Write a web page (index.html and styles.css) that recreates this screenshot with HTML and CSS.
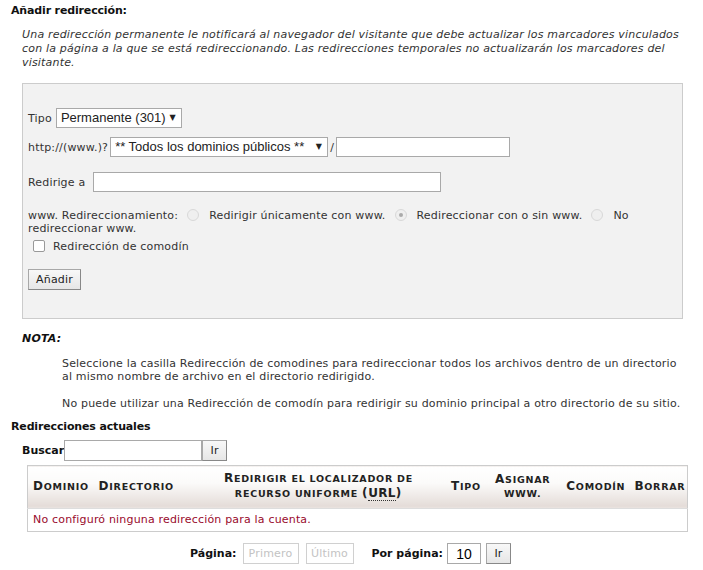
FILE: index.html
```html
<!DOCTYPE html>
<html lang="es">
<head>
<meta charset="utf-8">
<title>Redirecciones</title>
<link rel="stylesheet" href="styles.css">
</head>
<body>
<h2 class="title">Añadir redirección:</h2>
<p class="intro">Una redirección permanente le notificará al navegador del visitante que debe actualizar los marcadores vinculados con la página a la que se está redireccionando. Las redirecciones temporales no actualizarán los marcadores del visitante.</p>

<div class="box">
  <div class="row row-tipo">
    <label class="lbl">Tipo</label>
    <span class="sel sel-tipo"><select><option>Permanente (301)</option></select></span>
  </div>
  <div class="row row-dom">
    <label class="lbl">http://(www.)?</label><span class="sel sel-dom"><select><option>** Todos los dominios públicos **</option></select></span><span class="slash">/</span><input class="txt txt-path" type="text">
  </div>
  <div class="row row-redir">
    <label class="lbl">Redirige a</label>
    <input class="txt txt-redir" type="text">
  </div>
  <div class="row row-www"><span>www. Redireccionamiento:</span><span class="radio"></span><span>Redirigir únicamente con www.</span><span class="radio on"></span><span>Redireccionar con o sin www.</span><span class="radio"></span><span>No</span><br><span>redireccionar www.</span></div>
  <div class="row row-wild">
    <span class="check"></span><span>Redirección de comodín</span>
  </div>
  <div class="row row-btn">
    <button class="btn btn-add">Añadir</button>
  </div>
</div>

<h3 class="nota">NOTA:</h3>
<p class="note">Seleccione la casilla Redirección de comodines para redireccionar todos los archivos dentro de un directorio al mismo nombre de archivo en el directorio redirigido.</p>
<p class="note note2">No puede utilizar una Redirección de comodín para redirigir su dominio principal a otro directorio de su sitio.</p>

<h2 class="title2">Redirecciones actuales</h2>
<div class="search">
  <label class="blbl">Buscar</label><input class="txt txt-search" type="text"><button class="btn btn-ir">Ir</button>
</div>

<table class="tbl">
  <colgroup>
    <col class="w-dom"><col class="w-dir"><col class="w-url"><col class="w-tipo"><col class="w-www"><col class="w-com"><col class="w-del">
  </colgroup>
  <thead>
    <tr>
      <th class="c-dom"><span class="ini">D</span>ominio</th>
      <th class="c-dir"><span class="ini">D</span>irectorio</th>
      <th class="c-url"><span class="ini">R</span>edirigir el localizador de<br>recurso uniforme <span class="ini">(</span><abbr class="ini">URL</abbr><span class="ini">)</span></th>
      <th class="c-tipo"><span class="ini">T</span>ipo</th>
      <th class="c-www"><span class="ini">A</span>signar<br>www.</th>
      <th class="c-com"><span class="ini">C</span>omodín</th>
      <th class="c-del"><span class="ini">B</span>orrar</th>
    </tr>
  </thead>
  <tbody>
    <tr><td colspan="7" class="empty">No configuró ninguna redirección para la cuenta.</td></tr>
  </tbody>
</table>

<div class="pager">
  <span class="blbl">Página:</span>
  <button class="btn btn-dis btn-first">Primero</button>
  <button class="btn btn-dis btn-last">Último</button>
  <span class="blbl per">Por página:</span>
  <input class="txt txt-per" type="text" value="10">
  <button class="btn btn-ir">Ir</button>
</div>
</body>
</html>
```
FILE: styles.css
```css
html, body { margin: 0; padding: 0; background: #fff; }
body {
  font-family: "DejaVu Sans", Verdana, sans-serif;
  font-size: 11px;
  letter-spacing: 0.18px;
  color: #333;
  width: 703px;
}
.title {
  margin: 0;
  padding: 4px 0 0 11px;
  font-size: 11px;
  font-weight: bold;
  color: #111;
  line-height: 14px;
  letter-spacing: -0.15px;
}
.intro {
  margin: 10px 20px 0 22px;
  font-style: italic;
  line-height: 14px;
}
.box {
  margin: 13px 0 0 22px;
  width: 654px;
  height: 234px;
  border: 1px solid #ccc;
  background: #f2f2f2;
  padding: 0 0 0 5px;
  box-sizing: content-box;
}
.row { display: flex; align-items: center; }
.row-tipo { margin-top: 24px; height: 20px; }
.row-dom { margin-top: 9px; height: 20px; }
.row-redir { margin-top: 15px; height: 20px; }
.row-www { display: block; margin-top: 17px; line-height: 13px; padding-right: 40px; }
.row-wild { margin-top: 4px; height: 14px; }
.row-btn { margin-top: 16px; }
.lbl { margin-right: 4px; }
.row-dom .lbl { margin-right: 2px; }
.sel { position: relative; display: inline-block; }
.sel select {
  appearance: none;
  -webkit-appearance: none;
  font-family: "Liberation Sans", Arial, sans-serif;
  font-size: 13px;
  letter-spacing: 0;
  color: #222;
  background: #fff;
  border: 1px solid #a9a9a9;
  height: 20px;
  padding: 0 0 0 4px;
  margin: 0;
  border-radius: 0;
  line-height: 18px;
}
.sel::after {
  content: "▼";
  position: absolute;
  right: 6px;
  top: 5px;
  font-size: 8px;
  line-height: 9px;
  color: #222;
  pointer-events: none;
}
.sel-tipo select { width: 126px; }
.sel-dom select { width: 218px; }
.slash { margin: 0 2px 0 2px; }
.txt {
  font-family: "DejaVu Sans", Verdana, sans-serif;
  font-size: 11px;
  height: 20px;
  box-sizing: border-box;
  border: 1px solid #a9a9a9;
  background: #fff;
  margin: 0;
  padding: 0 3px;
}
.txt-path { width: 174px; }
.txt-redir { width: 348px; margin-left: 4px; }
.radio {
  display: inline-block;
  width: 12px;
  height: 12px;
  border-radius: 50%;
  border: 1px solid #d8d8d8;
  background: #efefef;
  box-sizing: border-box;
  vertical-align: -2px;
  margin: 0 10px 0 9px;
  position: relative;
}
.radio.on::after {
  content: "";
  position: absolute;
  left: 3px; top: 3px;
  width: 4px; height: 4px;
  border-radius: 50%;
  background: #aaa;
}
.check {
  display: inline-block;
  width: 12px;
  height: 12px;
  border: 1px solid #999;
  border-radius: 2px;
  background: #fff;
  box-sizing: border-box;
  margin: 0 8px 0 5px;
}
.btn {
  font-family: "DejaVu Sans", Verdana, sans-serif;
  font-size: 11px;
  letter-spacing: 0.18px;
  color: #222;
  background: linear-gradient(#f8f8f8, #e6e6e6);
  border: 1px solid #a8a8a8;
  border-right-color: #888;
  border-bottom-color: #888;
  border-radius: 0;
  height: 21px;
  padding: 0 7px;
  margin: 0;
  line-height: 19px;
}
.btn-add { width: 53px; padding: 0; }
.nota {
  margin: 13px 0 0 22px;
  font-size: 11px;
  font-style: italic;
  font-weight: bold;
  color: #111;
  line-height: 14px;
}
.note {
  margin: 11px 20px 0 62px;
  line-height: 13px;
}
.note2 { margin-top: 14px; }
.title2 {
  margin: 10px 0 0 11px;
  font-size: 11px;
  font-weight: bold;
  color: #111;
  line-height: 14px;
  letter-spacing: -0.15px;
}
.search {
  margin: 6px 0 0 22px;
  display: flex;
  align-items: center;
  height: 21px;
}
.blbl { font-weight: bold; color: #111; letter-spacing: 0; }
.txt-search { width: 138px; height: 21px; }
.btn-ir { width: 25px; padding: 0; }
.tbl {
  margin: 4px 0 0 27px;
  width: 661px;
  table-layout: fixed;
  border-collapse: collapse;
  border: 1px solid #ccc;
}
.w-dom { width: 68px; }
.w-dir { width: 124px; }
.w-url { width: 197px; }
.w-tipo { width: 73px; }
.w-www { width: 65px; }
.w-com { width: 75px; }
.w-del { width: 57px; }
.tbl th {
  text-transform: uppercase;
  font-weight: bold;
  font-size: 9.5px;
  color: #222;
  line-height: 14px;
  padding: 5px 0 7px 0;
  background: linear-gradient(#fff 0%, #fbfaf9 40%, #e4dcd8 95%, #ece6e3 100%);
  vertical-align: middle;
  letter-spacing: 0.75px;
  white-space: nowrap;
  overflow: visible;
  height: 27px;
  text-align: left;
}
.tbl th .ini { font-size: 12px; }
.tbl th.c-dom { padding-left: 5px; }
.tbl th.c-dir { padding-left: 3px; }
.tbl th.c-url { text-align: center; }
.tbl th.c-tipo { padding-left: 34px; }
.tbl th.c-www { text-align: center; }
.tbl th.c-com { padding-left: 11px; }
.tbl th.c-del { padding-left: 4px; }
abbr { text-decoration: none; border-bottom: 1px dotted #333; letter-spacing: 0.3px; }
.tbl td.empty {
  color: #990a2c;
  padding: 4px 5px 5px 5px;
  line-height: 13px;
  border-top: 1px solid #ddd;
}
.pager {
  margin: 11px 0 0 190px;
  display: flex;
  align-items: center;
  height: 21px;
}
.btn-dis {
  background: #fff;
  color: #c3c3c3;
  border: 1px solid #d0d0d0;
  padding: 0;
}
.btn-first { width: 56px; margin-left: 6px; }
.btn-last { width: 48px; margin-left: 7px; }
.per { margin-left: 18px; }
.txt-per { width: 34px; height: 21px; margin-left: 4px; font-family: "Liberation Sans", Arial, sans-serif; font-size: 14px; text-align: center; padding: 0; }
.pager .btn-ir { margin-left: 5px; }
```
